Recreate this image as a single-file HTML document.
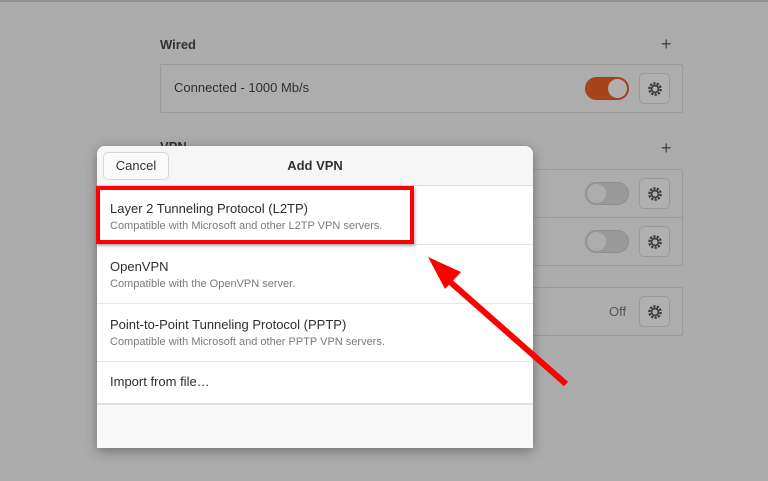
<!DOCTYPE html>
<html><head><style>
*{margin:0;padding:0;box-sizing:border-box}
body{width:768px;height:481px;background:#acacac;font-family:"Liberation Sans",sans-serif;position:relative;overflow:hidden;color:#2e2e2e}
.top{position:absolute;left:0;top:0;width:768px;height:2px;background:#8f8f8f}
.h{position:absolute;font-size:13px;font-weight:bold;color:#333}
.plus{position:absolute;font-size:18px;color:#444;line-height:1}
.box{position:absolute;left:160px;width:523px;border:1px solid #9a9a9a;background:#adadad;border-radius:2px}
.row{position:relative;height:47px;border-bottom:1px solid #9a9a9a}
.row:last-child{border-bottom:none}
.lbl{position:absolute;left:13px;top:15px;font-size:13px;color:#2f2f2f}
.tg{position:absolute;left:424px;top:12px;width:44px;height:23px;border-radius:12px;background:#999;border:1px solid #8e8e8e}
.tg i{position:absolute;left:1px;top:1px;width:19px;height:19px;border-radius:50%;background:#adadad}
.tg.on{background:#a8441c;border-color:#9c3f1c}
.tg.on i{left:22px;background:#b0b0b0}
.gb{position:absolute;left:478px;top:8px;width:31px;height:31px;border:1px solid #999;border-radius:5px;background:#b0b0b0}
.gb svg{position:absolute;left:7px;top:7px}
.dlg{position:absolute;left:97px;top:146px;width:436px;height:302px;background:#fff;border-radius:8px 8px 0 0;box-shadow:0 3px 12px rgba(0,0,0,.35);overflow:hidden}
.hd{height:40px;background:#f6f6f6;border-bottom:1px solid #dcdcdc;position:relative}
.cancel{position:absolute;left:6px;top:6px;width:66px;height:28px;border:1px solid #d6d6d6;border-radius:5px;background:#fafafa;font-size:13px;text-align:center;line-height:26px;color:#333}
.ttl{position:absolute;left:0;right:0;top:12px;text-align:center;font-weight:bold;font-size:13px;color:#333}
.it{position:relative;border-bottom:1px solid #e6e6e6;padding-left:13px}
.it b{display:block;font-weight:normal;font-size:13px;color:#2e2e2e}
.it s{display:block;text-decoration:none;font-size:11px;color:#7a7a7a;margin-top:4px}
.ft{position:absolute;left:0;right:0;bottom:0;height:45px;background:#f9f9f9;border-top:2px solid #e0e0e0}
</style></head><body>
<div class="top"></div>
<div class="h" style="left:160px;top:37px">Wired</div>
<div class="plus" style="left:661px;top:35px">+</div>
<div class="box" style="top:64px">
 <div class="row"><span class="lbl">Connected - 1000 Mb/s</span><div class="tg on"><i></i></div><div class="gb"><svg width="16" height="16" viewBox="0 0 16 16"><circle cx="8" cy="8" r="5.6" fill="none" stroke="#3a3a3a" stroke-width="2.4" stroke-dasharray="2.2 1.3"/><circle cx="8" cy="8" r="4.2" fill="#3a3a3a"/><circle cx="8" cy="8" r="2.6" fill="#b0b0b0"/></svg></div></div>
</div>
<div class="h" style="left:160px;top:139px">VPN</div>
<div class="plus" style="left:661px;top:139px">+</div>
<div class="box" style="top:169px">
 <div class="row" style="height:48px"><div class="tg"><i></i></div><div class="gb"><svg width="16" height="16" viewBox="0 0 16 16"><circle cx="8" cy="8" r="5.6" fill="none" stroke="#3a3a3a" stroke-width="2.4" stroke-dasharray="2.2 1.3"/><circle cx="8" cy="8" r="4.2" fill="#3a3a3a"/><circle cx="8" cy="8" r="2.6" fill="#b0b0b0"/></svg></div></div>
 <div class="row"><div class="tg"><i></i></div><div class="gb"><svg width="16" height="16" viewBox="0 0 16 16"><circle cx="8" cy="8" r="5.6" fill="none" stroke="#3a3a3a" stroke-width="2.4" stroke-dasharray="2.2 1.3"/><circle cx="8" cy="8" r="4.2" fill="#3a3a3a"/><circle cx="8" cy="8" r="2.6" fill="#b0b0b0"/></svg></div></div>
</div>
<div class="box" style="top:287px">
 <div class="row"><span style="position:absolute;left:448px;top:16px;font-size:13px;color:#555">Off</span><div class="gb"><svg width="16" height="16" viewBox="0 0 16 16"><circle cx="8" cy="8" r="5.6" fill="none" stroke="#3a3a3a" stroke-width="2.4" stroke-dasharray="2.2 1.3"/><circle cx="8" cy="8" r="4.2" fill="#3a3a3a"/><circle cx="8" cy="8" r="2.6" fill="#b0b0b0"/></svg></div></div>
</div>
<div class="dlg">
 <div class="hd"><div class="cancel">Cancel</div><div class="ttl">Add VPN</div></div>
 <div class="it" style="height:59px;padding-top:15px"><b>Layer 2 Tunneling Protocol (L2TP)</b><s>Compatible with Microsoft and other L2TP VPN servers.</s></div>
 <div class="it" style="height:59px;padding-top:14px"><b>OpenVPN</b><s>Compatible with the OpenVPN server.</s></div>
 <div class="it" style="height:58px;padding-top:13px"><b>Point-to-Point Tunneling Protocol (PPTP)</b><s>Compatible with Microsoft and other PPTP VPN servers.</s></div>
 <div class="it" style="height:40px;padding-top:12px;border:none"><b>Import from file…</b></div>
 <div class="ft"></div>
</div>
<div style="position:absolute;left:96px;top:186px;width:318px;height:58px;border:4px solid #f00;box-shadow:1px 2px 3px rgba(0,0,0,.3)"></div>
<svg style="position:absolute;left:0;top:0" width="768" height="481">
 <line x1="566" y1="384" x2="448" y2="280" stroke="#f00" stroke-width="6"/>
 <polygon points="428,257 461,272 445,289" fill="#f00"/>
</svg>
</body></html>
